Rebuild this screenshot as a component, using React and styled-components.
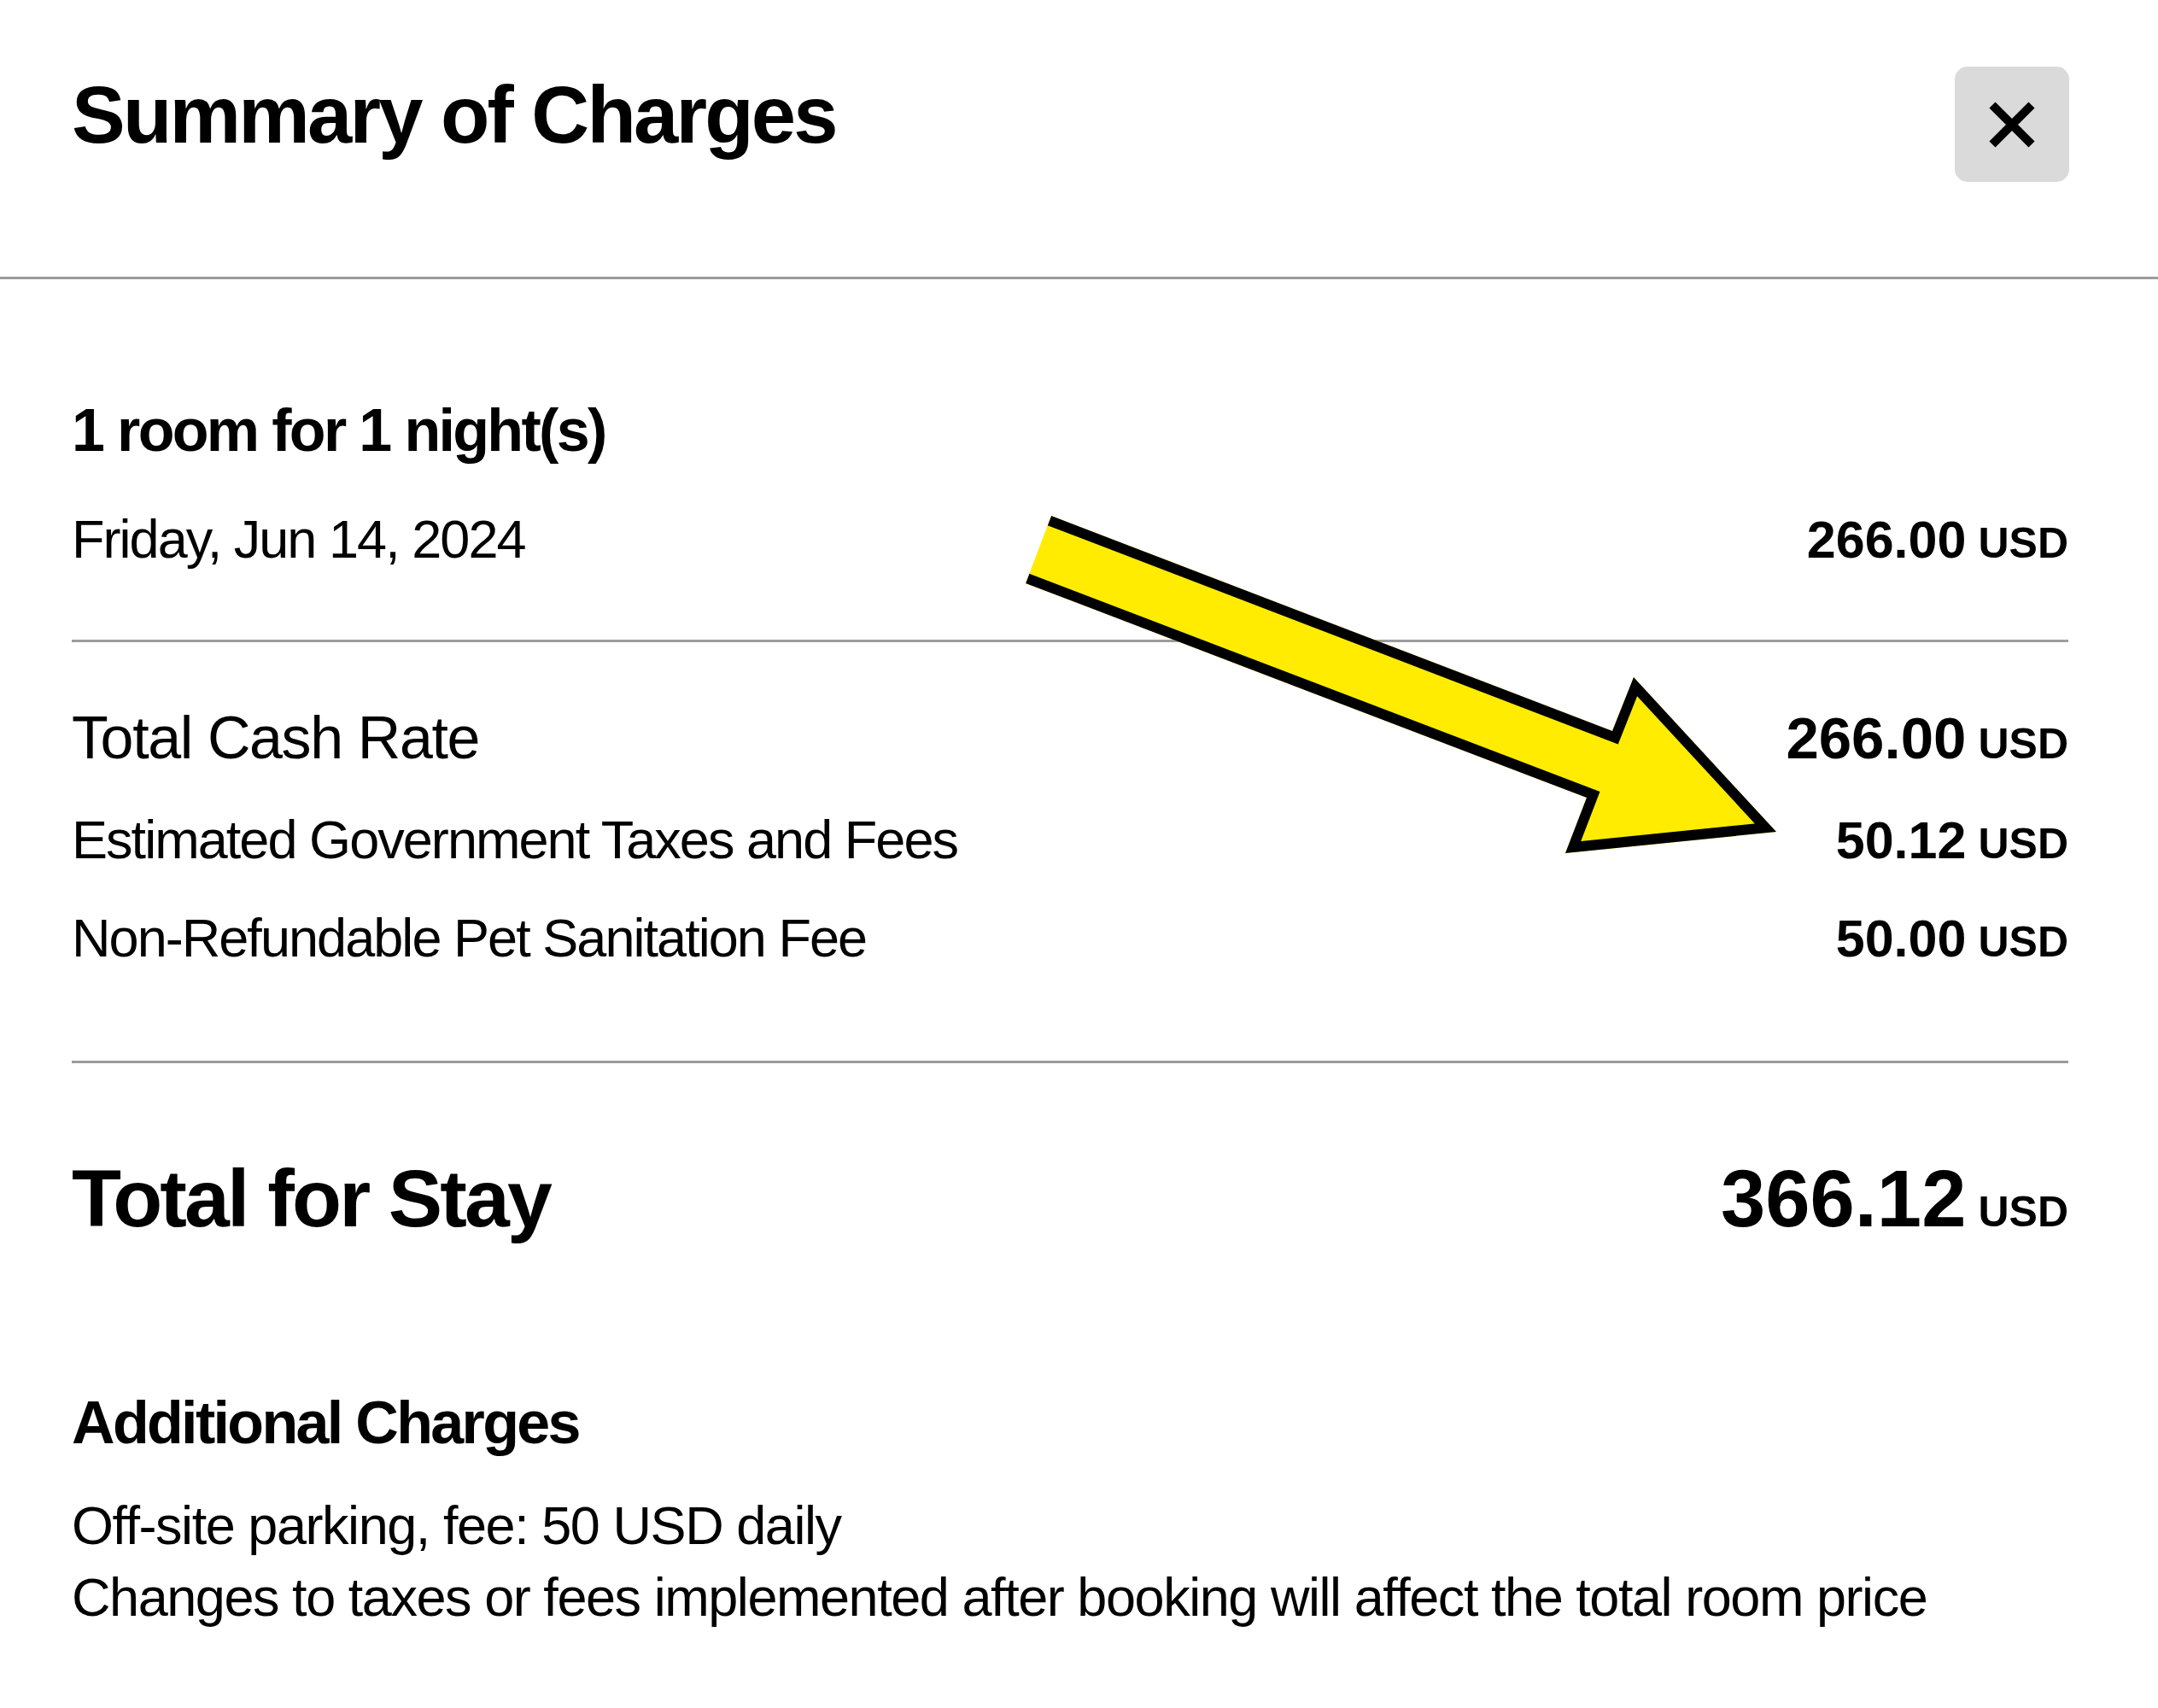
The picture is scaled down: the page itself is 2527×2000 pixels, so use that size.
import styled, { createGlobalStyle } from "styled-components";

const GlobalStyle = createGlobalStyle`
  html, body {
    margin: 0;
    padding: 0;
    background: #fff;
  }
  body {
    font-family: "Liberation Sans", Arial, Helvetica, sans-serif;
    color: #000;
  }
  * {
    box-sizing: border-box;
  }
`;

const Page = styled.div`
  position: relative;
  width: 2527px;
  min-height: 2000px;
  background: #fff;
`;

const Header = styled.header`
  display: flex;
  justify-content: space-between;
  align-items: flex-start;
  height: 327px;
  padding: 78px 104px 0 84px;
  border-bottom: 3px solid #9c9c9c;
`;

const Title = styled.h1`
  margin: 3px 0 0 0;
  font-size: 94px;
  line-height: 108px;
  font-weight: 700;
  letter-spacing: -0.03em;
`;

const CloseButton = styled.button`
  display: flex;
  align-items: center;
  justify-content: center;
  width: 134px;
  height: 135px;
  padding: 0;
  border: none;
  border-radius: 15px;
  background: #dadada;
  cursor: pointer;
`;

const Body = styled.main`
  padding: 0 105px 0 84px;
`;

const Heading = styled.h2`
  margin: ${(p) => p.$top}px 0 0 0;
  font-size: 70px;
  line-height: 80px;
  font-weight: 700;
  letter-spacing: -0.038em;
`;

const Rows = styled.div`
  display: flex;
  flex-direction: column;
  gap: 38px;
  margin-top: ${(p) => p.$top}px;
`;

const Row = styled.div`
  display: flex;
  justify-content: space-between;
  align-items: baseline;
`;

const Label = styled.span`
  font-size: ${(p) => (p.$large ? 70 : 63)}px;
  line-height: ${(p) => (p.$large ? 84 : 76)}px;
  letter-spacing: ${(p) => (p.$large ? -0.02 : -0.031)}em;
`;

const Amount = styled.span`
  font-size: ${(p) => (p.$large ? 69 : 61)}px;
  line-height: ${(p) => (p.$large ? 84 : 76)}px;
  font-weight: 700;
  white-space: nowrap;
`;

const Currency = styled.span`
  margin-left: 14px;
  font-size: 50px;
  line-height: 1;
  font-weight: 700;
`;

const Divider = styled.hr`
  margin: ${(p) => p.$top}px 0 0 0;
  height: 3px;
  border: none;
  background: #9c9c9c;
`;

const TotalRow = styled(Row)`
  margin-top: 103px;
`;

const TotalLabel = styled.span`
  font-size: 95px;
  line-height: 110px;
  font-weight: 700;
  letter-spacing: -0.03em;
`;

const TotalAmount = styled.span`
  font-size: 94px;
  line-height: 110px;
  font-weight: 700;
  white-space: nowrap;
`;

const Notes = styled.div`
  margin-top: 38px;
  font-size: 63px;
  line-height: 84px;
  letter-spacing: -0.023em;
`;

const Note = styled.p`
  margin: 0;
`;

const Arrow = styled.svg`
  position: absolute;
  left: 1190px;
  top: 595px;
  width: 900px;
  height: 415px;
  pointer-events: none;
`;

const arrowOutline = [
  [1231, 604],
  [1888, 856],
  [1913, 793],
  [2080, 974],
  [1833, 999],
  [1858, 934],
  [1201, 683],
];

const outlinePoints = arrowOutline.map((p) => p.join(",")).join(" ");

const CloseIcon = () => (
  <svg width="56" height="56" viewBox="0 0 56 56" aria-hidden="true">
    <path
      d="M5 5 L51 51 M51 5 L5 51"
      stroke="#000"
      strokeWidth="10"
      strokeLinecap="butt"
      fill="none"
    />
  </svg>
);

const Charge = ({ label, amount, large }) => (
  <Row>
    <Label $large={large}>{label}</Label>
    <Amount $large={large}>
      {amount}
      <Currency>USD</Currency>
    </Amount>
  </Row>
);

const App = () => {
  return (
    <Page>
      <GlobalStyle />
      <Header>
        <Title>Summary of Charges</Title>
        <CloseButton aria-label="Close">
          <CloseIcon />
        </CloseButton>
      </Header>

      <Body>
        <Heading $top={137}>1 room for 1 night(s)</Heading>
        <Rows $top={49}>
          <Charge label="Friday, Jun 14, 2024" amount="266.00" />
        </Rows>

        <Divider $top={79} />

        <Rows $top={70}>
          <Charge label="Total Cash Rate" amount="266.00" large />
          <Charge label="Estimated Government Taxes and Fees" amount="50.12" />
          <Charge label="Non-Refundable Pet Sanitation Fee" amount="50.00" />
        </Rows>

        <Divider $top={105} />

        <TotalRow>
          <TotalLabel>Total for Stay</TotalLabel>
          <TotalAmount>
            366.12
            <Currency>USD</Currency>
          </TotalAmount>
        </TotalRow>

        <Heading $top={167}>Additional Charges</Heading>
        <Notes>
          <Note>Off-site parking, fee: 50 USD daily</Note>
          <Note>
            Changes to taxes or fees implemented after booking will affect the
            total room price
          </Note>
        </Notes>
      </Body>

      <Arrow viewBox="1190 595 900 415" aria-hidden="true">
        <defs>
          <clipPath id="arrow-clip">
            <polygon points={outlinePoints} />
          </clipPath>
        </defs>
        <polygon points={outlinePoints} fill="#ffec00" />
        <polyline
          points={outlinePoints}
          fill="none"
          stroke="#000"
          strokeWidth="24"
          strokeLinejoin="miter"
          strokeMiterlimit="10"
          clipPath="url(#arrow-clip)"
        />
      </Arrow>
    </Page>
  );
};

export default App;
